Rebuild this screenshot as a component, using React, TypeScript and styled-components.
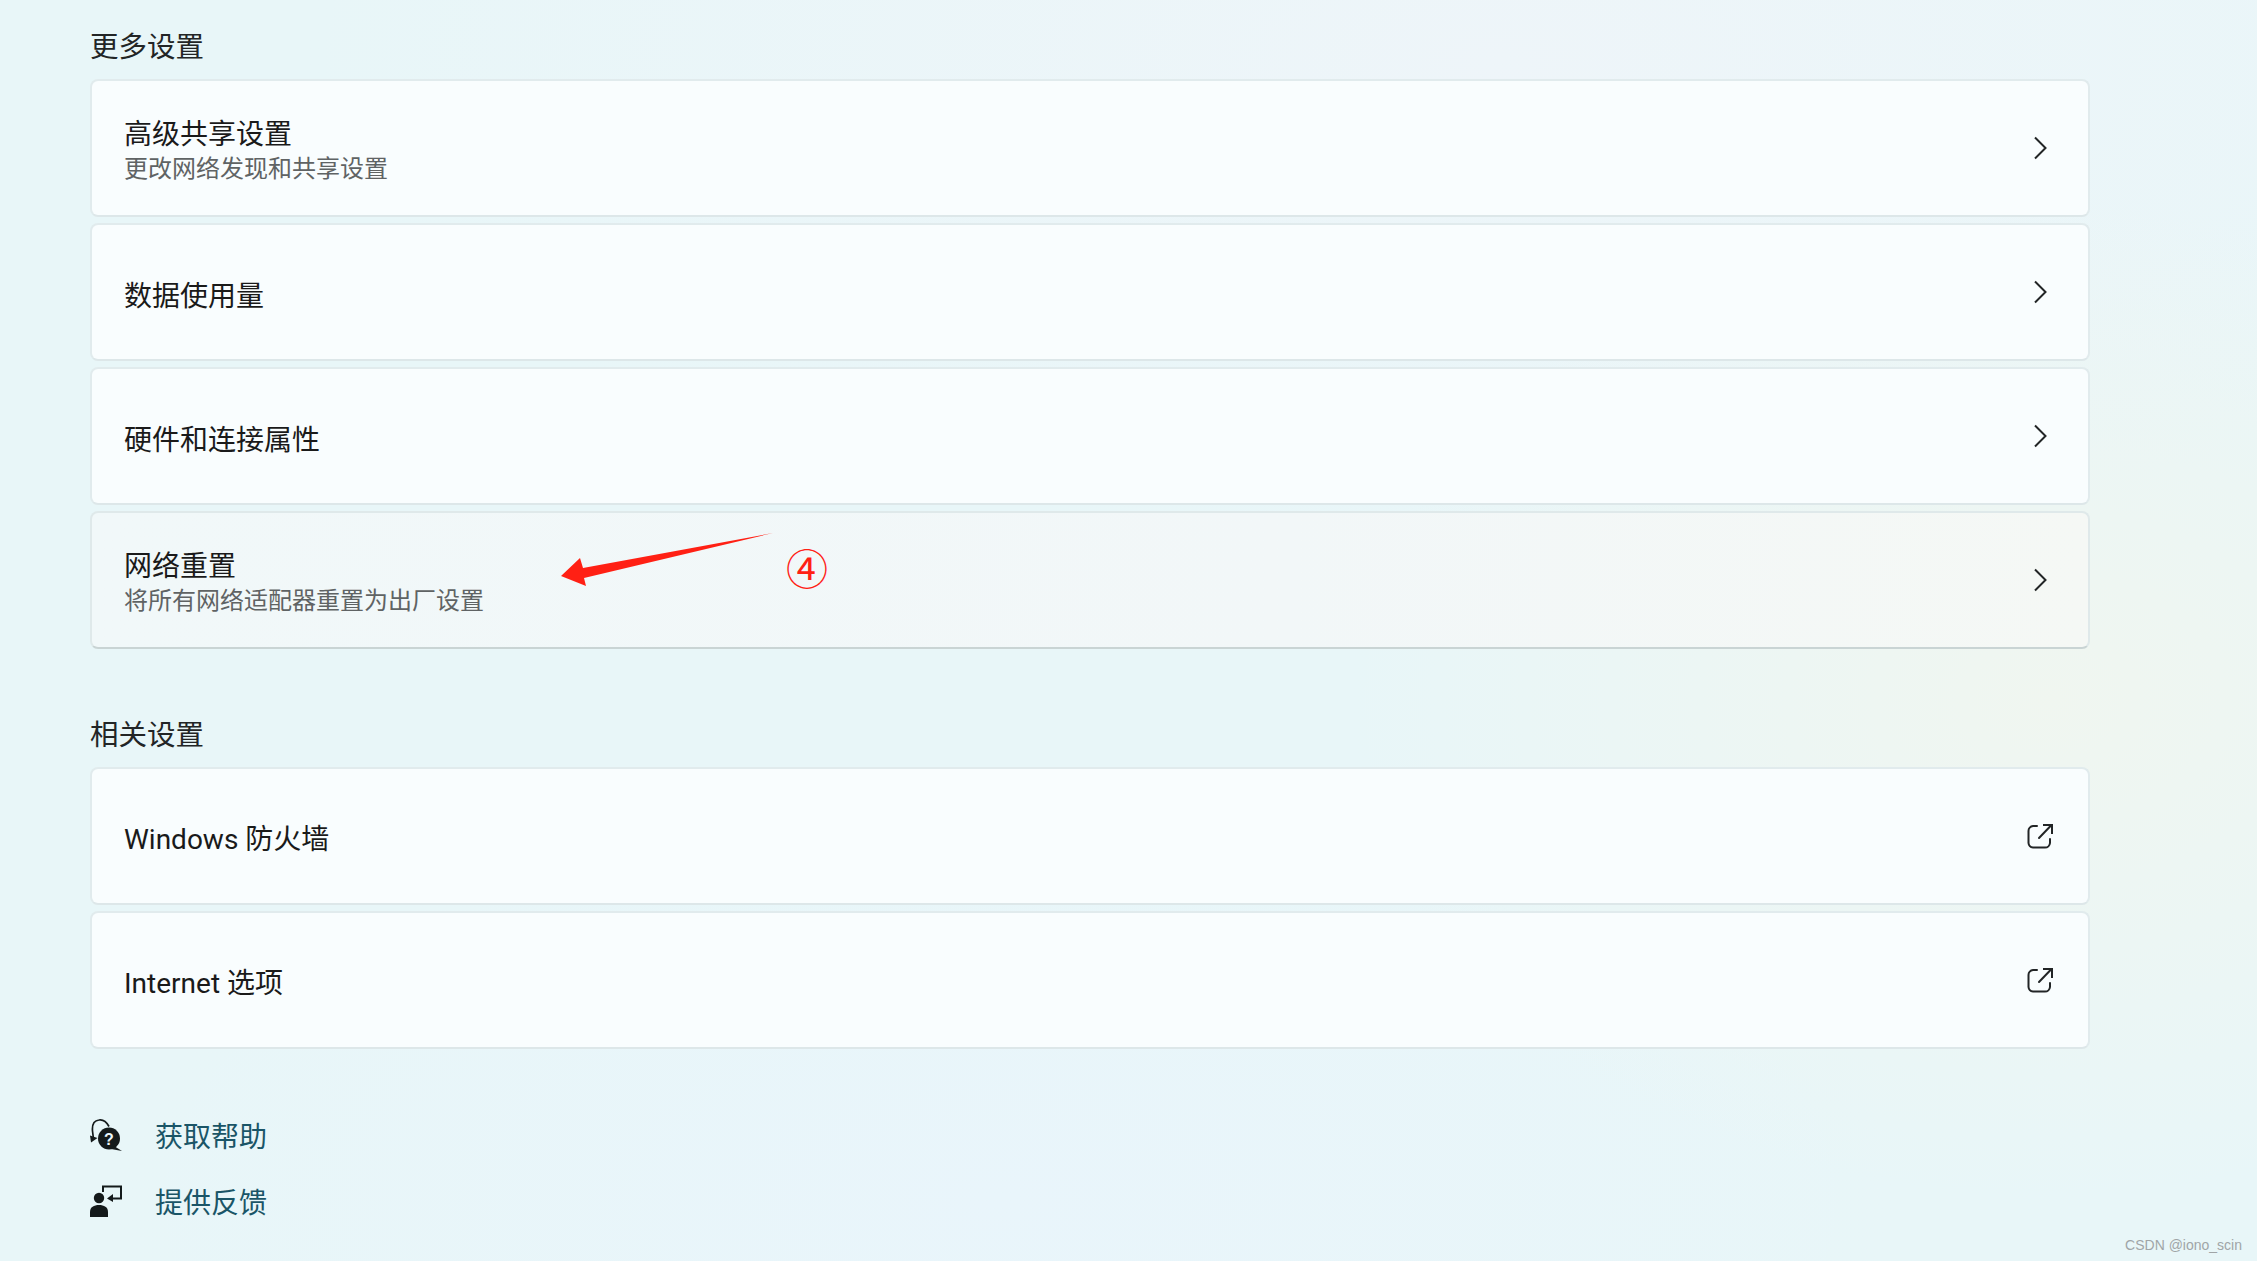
import React from 'react';
import styled, { createGlobalStyle } from 'styled-components';

const GlobalStyle = createGlobalStyle`
  html, body {
    margin: 0;
    padding: 0;
  }
  body {
    font-family: Roboto, 'Noto Sans CJK SC', sans-serif;
    overflow: hidden;
  }
`;

const Page = styled.div`
  position: relative;
  box-sizing: border-box;
  width: 2257px;
  height: 1261px;
  padding: 26px 167px 0 90px;
  background:
    radial-gradient(ellipse 700px 500px at 2050px 700px, #f0f6f0 0%, rgba(240, 246, 240, 0) 100%),
    radial-gradient(ellipse 1200px 500px at 1500px 60px, #eef5f9 0%, rgba(238, 245, 249, 0) 100%),
    radial-gradient(ellipse 900px 400px at 1000px 1200px, #e9f5fb 0%, rgba(233, 245, 251, 0) 100%),
    #e8f6f8;
`;

const SectionTitle = styled.h2`
  margin: 0 0 13px;
  padding-top: 3px;
  font-size: 28.5px;
  line-height: 37px;
  font-weight: 400;
  color: #222526;
`;

const CardList = styled.div`
  display: flex;
  flex-direction: column;
  gap: 6px;
  margin-bottom: 65px;
`;

const Card = styled.div<{ $hovered?: boolean }>`
  position: relative;
  box-sizing: border-box;
  display: flex;
  align-items: center;
  justify-content: space-between;
  height: 138px;
  padding: 0 35px 0 32px;
  border: 2px solid ${(p) => (p.$hovered ? '#dfe9ea' : '#e1ebed')};
  border-bottom-color: ${(p) => (p.$hovered ? '#c9d4d4' : '#dde7e9')};
  border-radius: 8px;
  background: ${(p) => (p.$hovered ? 'linear-gradient(90deg, #f1f8f9 0%, #f2f7f8 60%, #f5f8f5 100%)' : '#f9fdfe')};
`;

const CardText = styled.div<{ $drop: number }>`
  display: flex;
  flex-direction: column;
  padding-top: ${(p) => p.$drop}px;
`;

const CardTitle = styled.div`
  font-size: 28px;
  line-height: 36px;
  color: #1a1a1a;
`;

const CardSub = styled.div`
  font-size: 24px;
  line-height: 32px;
  color: #5f6364;
`;

const IconSlot = styled.span`
  display: flex;
  width: 26px;
  height: 26px;
  align-items: center;
  justify-content: center;
  color: #222526;
`;

const Arrow = styled.svg`
  position: absolute;
  left: 467px;
  top: 20px;
`;

const StepMark = styled.span`
  position: absolute;
  left: 694px;
  top: 31px;
  font-size: 42px;
  line-height: 54px;
  color: #ff2014;
`;

const Links = styled.div`
  display: flex;
  flex-direction: column;
  gap: 26px;
  margin-top: 66px;
`;

const LinkRow = styled.a`
  display: flex;
  align-items: center;
  gap: 33px;
  height: 40px;
  font-size: 28px;
  color: #1a5567;
`;

const LinkLabel = styled.span`
  margin-bottom: 1px;
`;

const LinkIcon = styled.svg`
  flex: none;
  color: #141a1b;
`;

const Watermark = styled.span`
  position: absolute;
  right: 15px;
  bottom: 8px;
  font-family: 'Liberation Sans', sans-serif;
  font-size: 14px;
  line-height: 16px;
  color: #a0a5a7;
`;

const Chevron = () => (
  <svg width="14" height="24" viewBox="0 0 14 24" fill="none">
    <path d="M2 1.5 L12.5 12 L2 22.5" stroke="currentColor" strokeWidth="2" />
  </svg>
);

const External = () => (
  <svg width="26" height="26" viewBox="0 0 26 26" fill="none" stroke="currentColor" strokeWidth="2">
    <path d="M10 3 H6 A5 5 0 0 0 1.5 8 V20 A5 5 0 0 0 6 24.5 H18 A5 5 0 0 0 23 20 V16" strokeLinecap="round" />
    <path d="M12 15 L24.5 2" strokeLinecap="round" />
    <path d="M16 2 H25 V11" />
  </svg>
);

const HelpIcon = () => (
  <LinkIcon width="32" height="33" viewBox="0 0 32 33" fill="none">
    <circle cx="19" cy="19.5" r="11" fill="currentColor" />
    <path d="M24 27 L32 32 L21 30 Z" fill="currentColor" />
    <path d="M19 7.5 C16 2, 12 0.5, 9 1 C4 1.5, 2 6, 2.5 12 L3.5 20" stroke="currentColor" strokeWidth="1.7" />
    <path d="M0 16.5 L7.5 19 L1 23.5 Z" fill="currentColor" />
    <text x="19" y="25.5" textAnchor="middle" fontSize="16" fontWeight="700" fontFamily="Liberation Sans, sans-serif" fill="#eaf6fa">?</text>
  </LinkIcon>
);

const FeedbackIcon = () => (
  <LinkIcon width="32" height="32" viewBox="0 0 32 32" fill="none">
    <circle cx="9" cy="13" r="5.2" fill="currentColor" />
    <path d="M0 32 V27 C0 22, 4 20, 9 20 C14 20, 18 22, 18 27 V32 Z" fill="currentColor" />
    <path d="M13 7 V1.5 H31 V13.5 H21" stroke="currentColor" strokeWidth="2" />
    <path d="M23 9 V17 L17 13.5 Z" fill="currentColor" />
  </LinkIcon>
);

const moreSettings = [
  { title: '高级共享设置', sub: '更改网络发现和共享设置' },
  { title: '数据使用量' },
  { title: '硬件和连接属性' },
  { title: '网络重置', sub: '将所有网络适配器重置为出厂设置', hovered: true },
];

const relatedSettings = ['Windows 防火墙', 'Internet 选项'];

const App: React.FC = () => (
  <Page>
    <GlobalStyle />
    <SectionTitle>更多设置</SectionTitle>
    <CardList>
      {moreSettings.map((item) => (
        <Card key={item.title} $hovered={item.hovered}>
          <CardText $drop={item.sub ? 6 : 10}>
            <CardTitle>{item.title}</CardTitle>
            {item.sub && <CardSub>{item.sub}</CardSub>}
          </CardText>
          <IconSlot>
            <Chevron />
          </IconSlot>
          {item.hovered && (
            <>
              <Arrow width="216" height="56" viewBox="0 0 216 56">
                <path d="M2 43 L21 25 L24 35 L214 0 L25 45 L27 53 Z" fill="#ff2014" />
              </Arrow>
              <StepMark>④</StepMark>
            </>
          )}
        </Card>
      ))}
    </CardList>
    <SectionTitle>相关设置</SectionTitle>
    <CardList>
      {relatedSettings.map((title) => (
        <Card key={title}>
          <CardText $drop={7}>
            <CardTitle>{title}</CardTitle>
          </CardText>
          <IconSlot>
            <External />
          </IconSlot>
        </Card>
      ))}
    </CardList>
    <Links>
      <LinkRow>
        <HelpIcon />
        <LinkLabel>获取帮助</LinkLabel>
      </LinkRow>
      <LinkRow>
        <FeedbackIcon />
        <LinkLabel>提供反馈</LinkLabel>
      </LinkRow>
    </Links>
    <Watermark>CSDN @iono_scin</Watermark>
  </Page>
);

export default App;
